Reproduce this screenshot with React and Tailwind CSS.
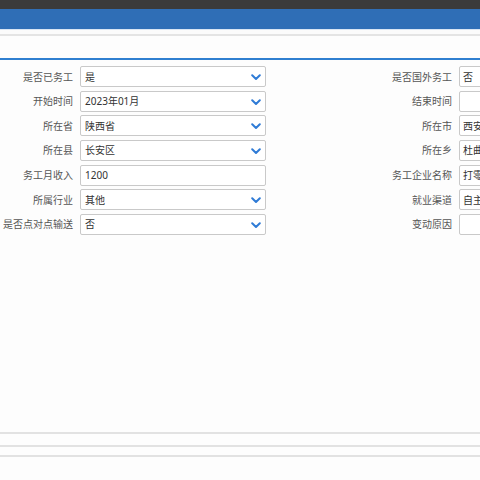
import React from 'react';

const rows = [
  { l: '是否已务工', v: '是', sel: true, r: '是否国外务工', rv: '否' },
  { l: '开始时间', v: '2023年01月', sel: true, r: '结束时间', rv: '' },
  { l: '所在省', v: '陕西省', sel: true, r: '所在市', rv: '西安' },
  { l: '所在县', v: '长安区', sel: true, r: '所在乡', rv: '杜曲' },
  { l: '务工月收入', v: '1200', sel: false, r: '务工企业名称', rv: '打零' },
  { l: '所属行业', v: '其他', sel: true, r: '就业渠道', rv: '自主' },
  { l: '是否点对点输送', v: '否', sel: true, r: '变动原因', rv: '' },
];

const Chevron = () => (
  <svg width="10" height="7" viewBox="0 0 10 7" className="absolute right-[4px] top-[7px]">
    <path d="M1.2 1.3 L5 5 L8.8 1.3" fill="none" stroke="#2f7bd6" strokeWidth="2" strokeLinecap="round" strokeLinejoin="round" />
  </svg>
);

export default function App() {
  return (
    <div className="w-[480px] h-[480px] overflow-hidden bg-[#fdfdfd] flex flex-col text-[10px] leading-none" style={{ fontFamily: '"Noto Sans", "Noto Sans CJK SC", sans-serif' }}>
      <div className="h-[9px] bg-[#3b3b3b]" />
      <div className="h-[20px] bg-[#2f6eb6]" />
      <div className="h-[1px] bg-[#d9e5f3]" />
      <div className="h-[4px] bg-[#fbfbfb]" />
      <div className="h-[2px] bg-[#e4e4e4]" />
      <div className="h-[22px] bg-[#fdfdfd]" />
      <div className="h-[2px] bg-[#2f7fd0]" />
      <div className="flex flex-col gap-[3.67px] pt-[6px]">
        {rows.map((row, i) => (
          <div key={i} className="flex items-center h-[21px]">
            <div className="w-[73px] shrink-0 text-right text-[#555] whitespace-nowrap">{row.l}</div>
            <div className="relative ml-[7px] w-[186px] shrink-0 h-[21px] border border-[#c9c9c9] rounded-[2px] bg-white flex items-center pl-[4px] text-[#333]">
              {row.v}
              {row.sel && <Chevron />}
            </div>
            <div className="w-[186px] shrink-0 text-right text-[#555] whitespace-nowrap">{row.r}</div>
            <div className="ml-[7px] w-[60px] shrink-0 h-[21px] border border-[#c9c9c9] rounded-[2px] bg-white flex items-center pl-[3px] text-[#333] whitespace-nowrap overflow-hidden">
              {row.rv}
            </div>
          </div>
        ))}
      </div>
      <div className="mt-[197px] h-[2px] bg-[#e2e2e2]" />
      <div className="mt-[11px] h-[2px] bg-[#e2e2e2]" />
      <div className="mt-[8px] h-[2px] bg-[#e2e2e2]" />
    </div>
  );
}
